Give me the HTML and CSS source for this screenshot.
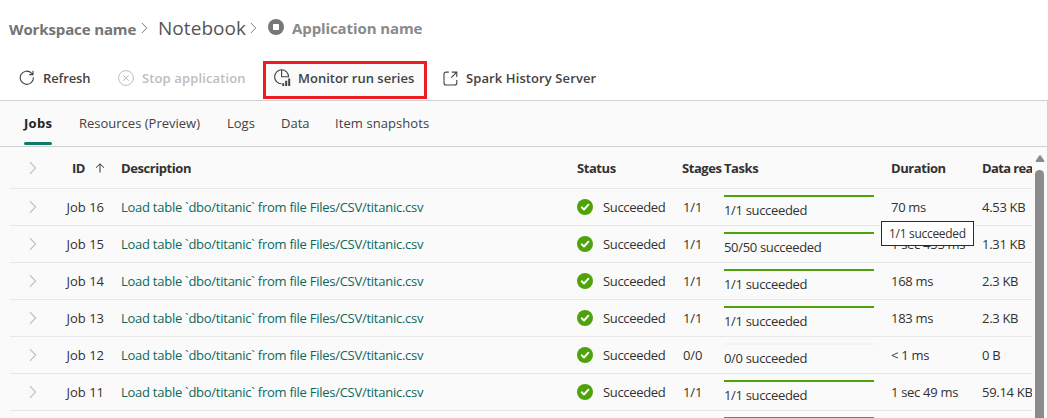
FILE: index.html
```
<!DOCTYPE html>
<html lang="en">
<head>
<meta charset="utf-8">
<title>Application jobs</title>
<link rel="stylesheet" href="styles.css">
</head>
<body>
<svg class="defs" width="0" height="0">
  <symbol id="chev" viewBox="0 0 8 14"><path d="M1 1.2 6.6 7 1 12.8" fill="none" stroke="currentColor" stroke-width="1.1"/></symbol>
  <symbol id="ok" viewBox="0 0 16 16"><circle cx="8" cy="8" r="8" fill="#4fa30a"/><path d="M4.7 8.3 7 10.5 11.4 5.7" fill="none" stroke="#fff" stroke-width="1.9" stroke-linecap="round" stroke-linejoin="round"/></symbol>
</svg>
<nav class="crumbs">
  <span class="crumb workspace">Workspace name</span>
  <svg class="sep sep-a" width="7" height="12"><use href="#chev"/></svg>
  <span class="crumb notebook">Notebook</span>
  <svg class="sep sep-b" width="7" height="12"><use href="#chev"/></svg>
  <svg class="stop-dot" width="16" height="16" viewBox="0 0 16 16"><circle cx="8" cy="8" r="8" fill="#777"/><rect x="5" y="5" width="6" height="6" rx=".6" fill="#fff"/></svg>
  <span class="crumb application">Application name</span>
</nav>
<div class="toolbar">
  <button class="tool refresh">
    <svg width="16" height="16" viewBox="0 0 16 16" fill="none" stroke="currentColor" stroke-width="1.1"><path d="M14.4 7.2A6.6 6.6 0 1 1 12.5 3.1L13.9 4.5M14 .8V4.6H10.2"/></svg>
    <span>Refresh</span>
  </button>
  <button class="tool stop">
    <svg width="16" height="16" viewBox="0 0 16 16" fill="none" stroke="currentColor" stroke-width="1"><circle cx="8" cy="8" r="7.4"/><path d="M5.3 5.3 10.7 10.7M10.7 5.3 5.3 10.7"/></svg>
    <span>Stop application</span>
  </button>
  <button class="tool monitor">
    <svg width="17" height="18" viewBox="0 0 17 18" fill="none" stroke="currentColor" stroke-width="1.1"><path d="M7.4 14.8A7 7 0 1 1 14.6 7.8H7.6V.9"/><path d="M9.2 17V14.2M12.2 17V11.8M15.2 17V9.6" stroke-width="2"/></svg>
    <span>Monitor run series</span>
  </button>
  <button class="tool history">
    <svg width="15" height="15" viewBox="0 0 15 15" fill="none" stroke="currentColor" stroke-width="1.1"><path d="M5.8 1.1H3A2 2 0 0 0 1 3.1V12A2 2 0 0 0 3 14H11.8A2 2 0 0 0 13.8 12V9M8.8 1.1H13.8V6.1M13.6 1.3 8.2 6.7"/></svg>
    <span>Spark History Server</span>
  </button>
</div>
<main class="panel">
  <div class="tabs">
    <span class="tab active">Jobs</span>
    <span class="tab resources">Resources (Preview)</span>
    <span class="tab logs">Logs</span>
    <span class="tab data">Data</span>
    <span class="tab items">Item snapshots</span>
  </div>
  <div class="content">
    <div class="table" id="table">
      <div class="row head">
        <svg class="chev" width="8" height="14"><use href="#chev"/></svg>
        <span class="id"><span>ID</span><svg width="10" height="10" viewBox="0 0 10 10" fill="none" stroke="currentColor"><path d="M5 9.5V1M1 4.7 5 .8 9 4.7"/></svg></span>
        <span>Description</span><span>Status</span><span class="h-stages">Stages</span><span>Tasks</span><span class="h-duration">Duration</span><span class="h-read">Data rea</span>
      </div>
    </div>
    <div class="scroll">
      <svg width="10" height="7" viewBox="0 0 10 7"><path d="M4.2.6Q5 0 5.8.6L9.4 6Q9.6 7 8.8 7H1.2Q.4 7 .6 6Z" fill="#8b8b8b"/></svg>
      <div class="thumb"></div>
    </div>
    <div class="tooltip">1/1 succeeded</div>
  </div>
</main>
<script src="jobs.js"></script>
</body>
</html>
```
FILE: styles.css
```
* { box-sizing: border-box; }
body {
  margin: 0;
  height: 418px;
  overflow: hidden;
  display: flex;
  flex-direction: column;
  background: #fff;
  color: #323130;
  font: 13px/20px "Open Sans", sans-serif;
  white-space: nowrap;
}
.defs { position: absolute; }
.crumbs { height: 56px; flex: none; display: flex; align-items: center; padding-left: 9px; }
.workspace { width: 132px; font-size: 15px; font-weight: 700; color: #747474; letter-spacing: -.12px; padding-top: 1px; }
.notebook { width: 92px; margin-left: 10px; font-size: 19px; color: #555; letter-spacing: .05px; }
.sep { color: #777; flex: none; }
.application { margin-left: 8px; font-size: 15px; font-weight: 700; color: #8a8a8a; letter-spacing: -.1px; }
.stop-dot { margin-left: 11px; flex: none; margin-top: -2px; }
.toolbar { height: 44px; flex: none; display: flex; align-items: center; padding-left: 19px; }
.tool {
  display: flex; align-items: center; height: 38px; padding: 0; border: 0; background: none;
  font: 600 13px/20px "Open Sans", sans-serif; color: #424242; white-space: nowrap;
}
.tool svg { flex: none; }
.refresh { width: 99px; gap: 8px; letter-spacing: -.1px; }
.stop { width: 145px; gap: 8px; color: #bdbdbd; letter-spacing: .13px; }
.monitor { width: 164px; height: 38px; margin-top: 4px; padding: 0 0 4px 8px; gap: 7px; border: 3px solid #ed1c24; background: #fafafa; }
.history { margin-left: 16px; gap: 8px; letter-spacing: .1px; }
.panel { flex: 1; min-height: 0; background: #fafafa; border-top: 1px solid #d1d1d1; border-right: 1px solid #d1d1d1; }
.tabs { height: 46px; display: flex; border-bottom: 1px solid #d1d1d1; padding-left: 24px; color: #424242; }
.tab { padding-top: 12px; height: 45px; }
.tab.active { width: 28px; margin-right: 27px; color: #242424; font-weight: 700; letter-spacing: .3px; }
.tab.active::after { content: ""; display: block; width: 28px; height: 3px; margin-top: 9px; border-radius: 2px; background: #0c7a68; }
.resources { width: 148px; }
.logs { width: 54px; }
.data { width: 54px; }
.items { letter-spacing: .08px; }
.content { display: flex; position: relative; height: 271px; padding-left: 10px; }
.table { width: 1022px; overflow: hidden; }
.row {
  display: grid;
  grid-template-columns: 45px 49px 17px 456px 106px 41px 167px 91px 50px;
  align-items: center;
  height: 37px;
  border-bottom: 1px solid #e8e8e8;
}
.row > :nth-child(3) { grid-column: 4; }
.row.head { height: 42px; font-weight: 700; letter-spacing: -.43px; }
.head .h-stages { margin-left: -1px; }
.head .h-read { letter-spacing: -.62px; }
.chev { margin-left: 19px; color: #bdbdbd; }
.id { text-align: right; }
.head .id { display: flex; justify-content: flex-end; align-items: center; gap: 10px; margin-right: -1px; }
.desc { color: #0c695a; letter-spacing: -.26px; }
.status { display: flex; align-items: center; gap: 10px; letter-spacing: -.33px; }
.tasks { align-self: start; padding-top: 6px; letter-spacing: -.33px; }
.bar { width: 150px; height: 2px; margin-bottom: 3px; background: #f3f3f3; }
.fill { height: 2px; background: #4fa30a; }
.duration { letter-spacing: -.3px; }
.read { letter-spacing: -.3px; }
.stages { letter-spacing: -.1px; }
.scroll { width: 15px; padding: 8px 3px 0; }
.scroll svg { display: block; }
.thumb { width: 9px; height: 260px; margin-top: 8px; border-radius: 5px 5px 0 0; background: #8b8b8b; }
.tooltip { position: absolute; left: 881px; top: 74px; width: 93px; height: 25px; padding-left: 7px; border: 1px solid #2b2b2b; background: #fff; font-size: 12px; line-height: 24px; letter-spacing: -.3px; }
```
FILE: jobs.js
```
const jobs = [
  [16, 1, 1, '70 ms', '4.53 KB'],
  [15, 1, 50, '1 sec 455 ms', '1.31 KB'],
  [14, 1, 1, '168 ms', '2.3 KB'],
  [13, 1, 1, '183 ms', '2.3 KB'],
  [12, 0, 0, '&lt; 1 ms', '0 B'],
  [11, 1, 1, '1 sec 49 ms', '59.14 KB']
];
const rows = jobs.map(([id, stages, tasks, time, read]) => `
  <div class="row">
    <svg class="chev" width="8" height="14"><use href="#chev"/></svg>
    <span class="id">Job ${id}</span>
    <span class="desc">Load table \`dbo/titanic\` from file Files/CSV/titanic.csv</span>
    <span class="status"><svg width="16" height="16"><use href="#ok"/></svg><span>Succeeded</span></span>
    <span class="stages">${stages}/${stages}</span>
    <div class="tasks"><div class="bar"><div class="fill" style="width:${tasks ? 100 : 0}%"></div></div><span class="count">${tasks}/${tasks} succeeded</span></div>
    <span class="duration">${time}</span>
    <span class="read">${read}</span>
  </div>`);
// The next row has only its progress bar in view.
rows.push('<div class="row"><i></i><i></i><i></i><i></i><i></i><div class="tasks"><div class="bar"><div class="fill" style="width:100%"></div></div></div></div>');
document.getElementById('table').insertAdjacentHTML('beforeend', rows.join(''));
```
